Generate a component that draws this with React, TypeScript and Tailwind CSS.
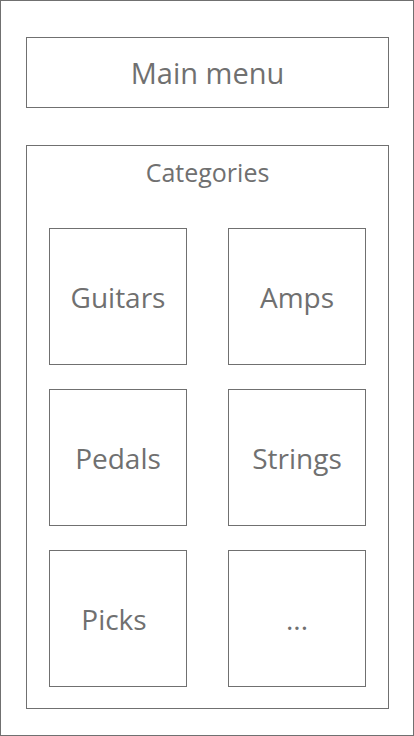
const categories = [
  { name: 'Guitars', extra: '' },
  { name: 'Amps', extra: '' },
  { name: 'Pedals', extra: '' },
  { name: 'Strings', extra: '' },
  { name: 'Picks', extra: 'pr-[8px]' },
  { name: '...', extra: '' },
];

export default function App() {
  return (
    <div
      className="w-[414px] h-[736px] border border-[#707070] bg-white pt-[36px] pl-[25px] pr-[24px] text-[#707070]"
      style={{ fontFamily: '"Open Sans", "Noto Sans", sans-serif' }}
    >
      {/* main menu */}
      <div className="h-[71px] border border-[#707070] flex items-center justify-center text-[29px]">
        Main menu
      </div>

      {/* categories */}
      <div className="mt-[37px] h-[564px] border border-[#707070] flex flex-col">
        <div className="pt-[12px] leading-[28px] text-[25px] mb-[42px] text-center">Categories</div>
        <div className="ml-[22px] grid grid-cols-[138px_138px] gap-x-[41px] gap-y-[24px]">
          {categories.map((c) => (
            <div
              key={c.name}
              className={`h-[137px] border border-[#707070] flex items-center justify-center text-[28px] ${c.extra}`}
            >
              {c.name}
            </div>
          ))}
        </div>
      </div>
    </div>
  );
}
